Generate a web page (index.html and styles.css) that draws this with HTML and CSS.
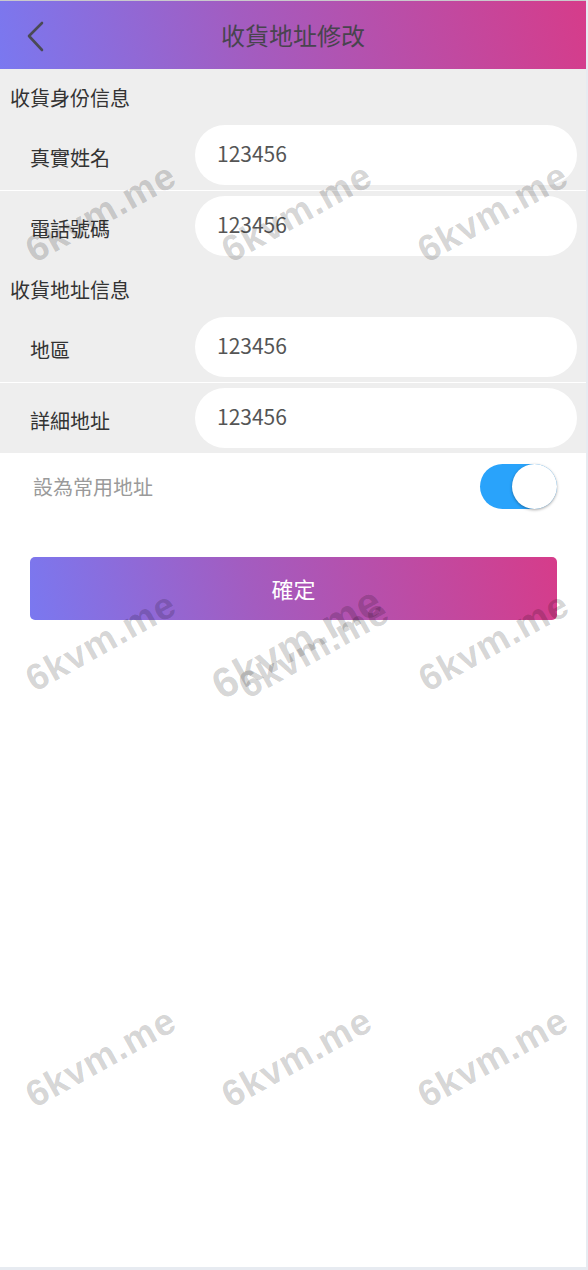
FILE: index.html
```html
<!DOCTYPE html>
<html lang="zh-Hant">
<head>
<meta charset="utf-8">
<title>收貨地址修改</title>
<link rel="stylesheet" href="styles.css">
</head>
<body>
<div class="page">
  <header class="topbar">
    <span class="back">
      <svg width="24" height="34" viewBox="0 0 24 34"><polyline points="16,2 3,15 16,29" fill="none" stroke="#4a4a55" stroke-width="2.6" stroke-linecap="round" stroke-linejoin="round"/></svg>
    </span>
    <h1 class="title">收貨地址修改</h1>
  </header>

  <section class="group">
    <div class="group-title">收貨身份信息</div>
    <div class="row divided">
      <label class="label">真實姓名</label>
      <div class="field">123456</div>
    </div>
    <div class="row">
      <label class="label">電話號碼</label>
      <div class="field">123456</div>
    </div>
    <div class="group-title">收貨地址信息</div>
    <div class="row divided">
      <label class="label">地區</label>
      <div class="field">123456</div>
    </div>
    <div class="row">
      <label class="label">詳細地址</label>
      <div class="field">123456</div>
    </div>
  </section>

  <div class="default-row">
    <span class="default-text">設為常用地址</span>
    <span class="switch"><span class="knob"></span></span>
  </div>

  <button class="confirm">確定</button>

  <div class="wm" style="left:101px;top:212px">6kvm.me</div>
  <div class="wm" style="left:297px;top:212px">6kvm.me</div>
  <div class="wm" style="left:493px;top:212px">6kvm.me</div>
  <div class="wm" style="left:101px;top:641px">6kvm.me</div>
  <div class="wm big" style="left:297px;top:642px">6kvm.me</div>
  <div class="wm" style="left:314px;top:648px">6kvm.me</div>
  <div class="wm" style="left:494px;top:641px">6kvm.me</div>
  <div class="wm" style="left:101px;top:1057px">6kvm.me</div>
  <div class="wm" style="left:297px;top:1057px">6kvm.me</div>
  <div class="wm" style="left:493px;top:1057px">6kvm.me</div>
</div>
</body>
</html>
```

FILE: styles.css
```css
html, body {
  margin: 0;
  padding: 0;
}
body {
  background: #e7ebf1;
  font-family: "Noto Sans CJK TC", "Open Sans", sans-serif;
}
.page {
  position: relative;
  width: 586px;
  height: 1266px;
  background: #ffffff;
  border-top: 1px solid #c9c9cc;
  overflow: hidden;
}
.topbar {
  height: 68px;
  display: flex;
  align-items: center;
  justify-content: center;
  position: relative;
  background: linear-gradient(76deg, #7a78f0, #a35cc0 42%, #d63c8a);
}
.back {
  position: absolute;
  left: 26px;
  top: 20px;
  display: flex;
}
.title {
  margin: 0;
  font-size: 24px;
  font-weight: 400;
  line-height: 30px;
  color: #48444e;
}
.group {
  background: #eeeeee;
}
.group-title {
  padding: 18px 10px 11px;
  font-size: 20px;
  line-height: 22px;
  color: #333333;
}
.row {
  height: 70px;
  display: flex;
  align-items: center;
  box-sizing: border-box;
}
.row.divided {
  height: 71px;
  border-bottom: 1px solid #ffffff;
}
.label {
  width: 195px;
  flex: none;
  padding-left: 30px;
  padding-top: 6px;
  box-sizing: border-box;
  font-size: 20px;
  line-height: 24px;
  color: #333333;
}
.field {
  width: 382px;
  height: 60px;
  flex: none;
  box-sizing: border-box;
  padding: 0 22px 4px;
  display: flex;
  align-items: center;
  background: #ffffff;
  border-radius: 30px;
  font-size: 21px;
  color: #555555;
}
.default-row {
  display: flex;
  align-items: center;
  justify-content: space-between;
  padding: 11px 29px 0 33px;
  height: 45px;
}
.default-text {
  font-size: 20px;
  color: #9a9a9a;
}
.switch {
  width: 77px;
  height: 45px;
  border-radius: 23px;
  background: #29a3fb;
  display: flex;
  justify-content: flex-end;
}
.knob {
  width: 45px;
  height: 45px;
  border-radius: 50%;
  background: #ffffff;
  box-shadow: 0 1px 3px rgba(0, 0, 0, 0.35);
}
.confirm {
  display: block;
  margin: 48px 0 0 30px;
  width: 527px;
  height: 63px;
  border: 0;
  border-radius: 5px;
  background: linear-gradient(76deg, #7a78f0, #a35cc0 42%, #d63c8a);
  color: #ffffff;
  font-family: "Noto Sans CJK TC", "Open Sans", sans-serif;
  font-size: 22px;
  padding: 0 0 2px;
}
.wm {
  position: absolute;
  transform: translate(-50%, -50%) rotate(-29deg);
  font-family: "Liberation Sans", Arial, sans-serif;
  font-weight: 700;
  font-size: 37px;
  line-height: 40px;
  letter-spacing: 1px;
  color: rgba(0, 0, 0, 0.18);
  white-space: nowrap;
  pointer-events: none;
}
.wm.big {
  font-size: 42px;
}
```
